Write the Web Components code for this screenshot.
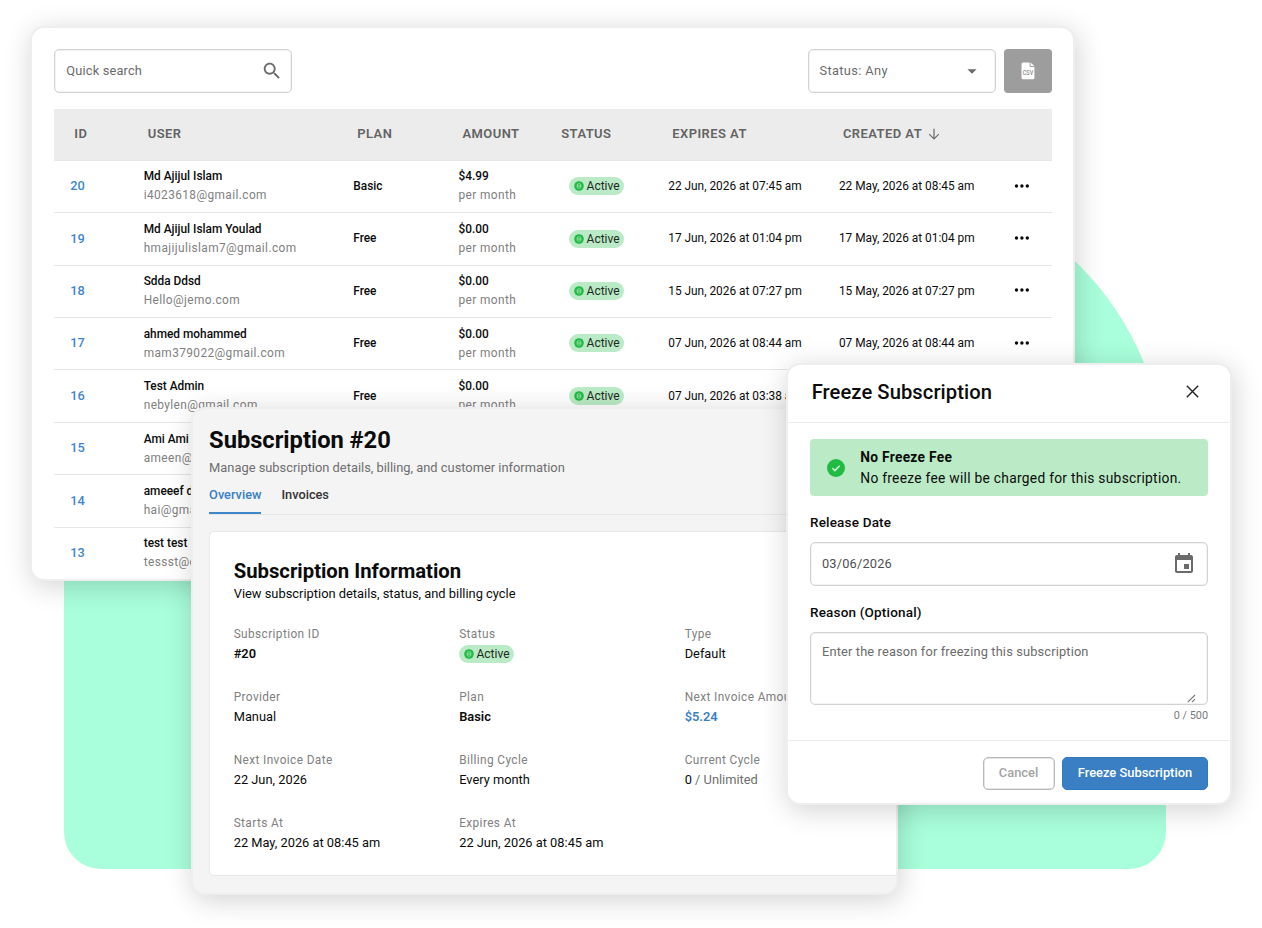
<!DOCTYPE html>
<html lang="en">
<head>
  <meta charset="UTF-8">
  <title>Subscriptions</title>
  <style>
    body {
      margin: 0;
      height: 928px;
      overflow: hidden;
      background: #fff;
      color: #0b0b0b;
      font-family: Roboto, "Liberation Sans", sans-serif;
    }
  </style>
</head>
<body>
  <subscription-scene></subscription-scene>

  <script>
    // Crea el shadow root a partir de un template
    function render(element, html) {
      const template = document.createElement('template');
      template.innerHTML = html;
      element.attachShadow({ mode: 'open' });
      element.shadowRoot.appendChild(template.content.cloneNode(true));
    }

    // Iconos
    const ICONS = {
      search: `<svg width="22" height="22" viewBox="0 0 24 24" fill="#6b6b6b"><path d="M15.5 14h-.79l-.28-.27C15.41 12.59 16 11.11 16 9.5 16 5.91 13.09 3 9.5 3S3 5.91 3 9.5 5.91 16 9.5 16c1.61 0 3.09-.59 4.23-1.57l.27.28v.79l5 4.99L20.49 19l-4.99-5zm-6 0C7.01 14 5 11.99 5 9.5S7.01 5 9.5 5 14 7.01 14 9.5 11.99 14 9.5 14z"/></svg>`,
      caret: `<svg width="22" height="22" viewBox="0 0 24 24" fill="#6b6b6b"><path d="M7 10l5 5 5-5z"/></svg>`,
      event: `<svg width="24" height="24" viewBox="0 0 24 24" fill="#6b6b6b"><path d="M17 12h-5v5h5zM16 1v2H8V1H6v2H5c-1.11 0-1.99.9-1.99 2L3 19c0 1.1.89 2 2 2h14c1.1 0 2-.9 2-2V5c0-1.1-.9-2-2-2h-1V1zm3 18H5V8h14z"/></svg>`,
      close: `<svg width="13" height="13" viewBox="0 0 13 13" fill="none" stroke="#222" stroke-width="1.4"><path d="M.8.8l11.4 11.4M12.2.8L.8 12.2"/></svg>`,
      arrow: `<svg width="12" height="12" viewBox="0 0 12 12" fill="none" stroke="#6b6b6b" stroke-width="1.2"><path d="M6 .8v10M1.2 6.1L6 10.9l4.8-4.8"/></svg>`,
      dots: `<svg width="16" height="6" viewBox="0 0 16 6" fill="#0b0b0b"><circle cx="2.5" cy="3" r="1.7"/><circle cx="7.9" cy="3" r="1.7"/><circle cx="13.3" cy="3" r="1.7"/></svg>`,
      check: `<svg width="18" height="18" viewBox="0 0 18 18"><circle cx="9" cy="9" r="9" fill="#21ba45"/><path d="M5.4 9.2l2.5 2.4 4.7-4.9" fill="none" stroke="#d5f5dc" stroke-width="1.5"/></svg>`,
      coin: `<svg width="10" height="10" viewBox="0 0 10 10"><circle cx="5" cy="5" r="4.8" fill="#21ba45"/><rect x="3.2" y="2.8" width="3.6" height="4.4" rx="1.2" fill="none" stroke="#a5e5b3" stroke-width=".8"/><path d="M3.2 5h3.6" stroke="#a5e5b3" stroke-width="1"/></svg>`,
      csv: `<svg width="14" height="18" viewBox="0 0 14 18"><path d="M2 .5h6.6v3.2q0 1.2 1.2 1.2h3.6v10.9q0 1.5-1.5 1.5H2Q.5 17.3.5 15.8V2Q.5.5 2 .5z" fill="#fff"/><path d="M9.5.5l3.9 3.6h-2.9q-1 0-1-1z" fill="#fff"/><text x="7" y="12.8" text-anchor="middle" textLength="10.4" lengthAdjust="spacingAndGlyphs" font-family="Roboto, sans-serif" font-size="6.5" font-weight="500" fill="#8d8d8d">CSV</text></svg>`,
      grip: `<svg width="9" height="9" viewBox="0 0 9 9" stroke="#777" stroke-width="1.1"><path d="M.8 8.2l7.2-7.2M5 8.2l3-3"/></svg>`
    };

    // Ventana con sombra
    class AppWindow extends HTMLElement {
      constructor() {
        super();
        render(this, `
          <style>
            :host {
              display: block;
              box-sizing: border-box;
              border: 2px solid #eee;
              border-radius: 14px;
              background: var(--window-bg, #fff);
              background-clip: padding-box;
              overflow: hidden;
              box-shadow: 2px 5px 28px rgba(0, 0, 0, 0.18);
            }
          </style>
          <slot></slot>
        `);
      }
    }

    // Caja de texto con icono al final
    class FieldBox extends HTMLElement {
      constructor() {
        super();
        render(this, `
          <style>
            :host {
              display: flex;
              justify-content: space-between;
              align-items: center;
              box-sizing: border-box;
              height: 44px;
              padding: 0 8.5px 1px 11px;
              border: 1px solid #d2d2d2;
              border-radius: 5px;
              box-shadow: inset 0 0 0 0.5px #e8e8e8;
              background: #fff;
              color: #6b6b6b;
              font-size: 12.8px;
              letter-spacing: 0.18px;
            }
            .icon { display: flex; margin-top: 1px; }
          </style>
          <slot></slot>
          <span class="icon">${ICONS[this.getAttribute('icon')] || ''}</span>
        `);
      }
    }

    class StatusPill extends HTMLElement {
      constructor() {
        super();
        render(this, `
          <style>
            :host {
              display: inline-flex;
              align-items: center;
              gap: 2.7px;
              box-sizing: border-box;
              width: 54.5px;
              height: 18px;
              padding-left: 4.6px;
              border-radius: 9px;
              background: #bbebc6;
              color: #1b2a1e;
              font-size: 12px;
              line-height: 18px;
            }
            svg { display: block; flex: none; }
          </style>
          ${ICONS.coin}<slot></slot>
        `);
      }
    }

    class SubscriptionRow extends HTMLElement {
      constructor() {
        super();
        const get = name => this.getAttribute(name) || '';
        render(this, `
          <style>
            :host {
              display: grid;
              grid-template-columns: var(--columns);
              align-items: center;
              box-sizing: border-box;
              height: 52.45px;
              padding-bottom: 0.1px;
              border-top: 1.3px solid #e6e6e6;
              font-size: 11.87px;
              line-height: 19px;
              white-space: nowrap;
            }
            div { padding-left: 16px; }
            .id { color: #3f86cb; font-weight: 500; font-size: 12.8px; }
            .strong { font-weight: 500; }
            .muted { display: block; color: #808080; letter-spacing: 0.4px; }
            .status { padding-left: 28px; padding-bottom: 0.6px; display: flex; }
            .id, .more { padding-bottom: 1.6px; }
            .more svg { display: block; }
          </style>
          <div class="id">${get('number')}</div>
          <div><span class="strong">${get('user')}</span><span class="muted">${get('email')}</span></div>
          <div class="strong">${get('plan')}</div>
          <div><span class="strong">${get('amount')}</span><span class="muted">${get('amount') && 'per month'}</span></div>
          <div class="status">${get('plan') && '<status-pill>Active</status-pill>'}</div>
          <div>${get('expires')}</div>
          <div>${get('created')}</div>
          <div class="more">${get('plan') && ICONS.dots}</div>
        `);
      }
    }

    class SubscriptionTable extends HTMLElement {
      constructor() {
        super();
        render(this, `
          <style>
            :host {
              --columns: 73.4px 209.6px 105.2px 98.8px 111px 170.7px 175px 1fr;
              display: block;
            }
            header {
              display: grid;
              grid-template-columns: var(--columns);
              align-items: center;
              box-sizing: border-box;
              height: 50.4px;
              padding-bottom: 2px;
              background: #ececec;
              color: #636363;
              font-size: 12.95px;
              font-weight: 600;
              letter-spacing: 0.46px;
            }
            header span { display: flex; align-items: center; gap: 5.5px; padding-left: 20px; }
            header svg { margin-top: 2px; }
          </style>
          <header>
            <span>ID</span><span>USER</span><span>PLAN</span><span>AMOUNT</span>
            <span>STATUS</span><span>EXPIRES AT</span><span>CREATED AT ${ICONS.arrow}</span>
          </header>
          <subscription-row number="20" user="Md Ajijul Islam" email="i4023618@gmail.com" plan="Basic" amount="$4.99" expires="22 Jun, 2026 at 07:45 am" created="22 May, 2026 at 08:45 am"></subscription-row>
          <subscription-row number="19" user="Md Ajijul Islam Youlad" email="hmajijulislam7@gmail.com" plan="Free" amount="$0.00" expires="17 Jun, 2026 at 01:04 pm" created="17 May, 2026 at 01:04 pm"></subscription-row>
          <subscription-row number="18" user="Sdda Ddsd" email="Hello@jemo.com" plan="Free" amount="$0.00" expires="15 Jun, 2026 at 07:27 pm" created="15 May, 2026 at 07:27 pm"></subscription-row>
          <subscription-row number="17" user="ahmed mohammed" email="mam379022@gmail.com" plan="Free" amount="$0.00" expires="07 Jun, 2026 at 08:44 am" created="07 May, 2026 at 08:44 am"></subscription-row>
          <subscription-row number="16" user="Test Admin" email="nebylen@gmail.com" plan="Free" amount="$0.00" expires="07 Jun, 2026 at 03:38 am"></subscription-row>
          <subscription-row number="15" user="Ami Ami" email="ameen@"></subscription-row>
          <subscription-row number="14" user="ameeef d" email="hai@gma"></subscription-row>
          <subscription-row number="13" user="test test" email="tessst@e"></subscription-row>
        `);
      }
    }

    class SubscriptionList extends HTMLElement {
      constructor() {
        super();
        render(this, `
          <style>
            :host { display: block; padding: 21.5px 21.5px 0 22.3px; }
            nav { display: flex; gap: 8px; margin-bottom: 16px; }
            .search { width: 238px; margin-right: auto; }
            .status { width: 188.5px; padding-right: 12.5px; letter-spacing: 0.36px; }
            button {
              display: flex;
              align-items: center;
              justify-content: center;
              width: 47.5px;
              height: 44px;
              padding: 0 0 1px;
              border: 0;
              border-radius: 4px;
              background: #9d9d9d;
            }
          </style>
          <nav>
            <field-box class="search" icon="search">Quick search</field-box>
            <field-box class="status" icon="caret">Status: Any</field-box>
            <button aria-label="Export">${ICONS.csv}</button>
          </nav>
          <subscription-table></subscription-table>
        `);
      }
    }

    class InfoItem extends HTMLElement {
      constructor() {
        super();
        render(this, `
          <style>
            :host {
              display: block;
              height: 63px;
              font-size: 12.83px;
              line-height: 20px;
              white-space: nowrap;
            }
            small {
              display: block;
              color: #808080;
              font-size: 11.85px;
              line-height: 19px;
              letter-spacing: 0.39px;
            }
          </style>
          <small>${this.getAttribute('label')}</small>
          <slot></slot>
        `);
      }
    }

    class SubscriptionDetails extends HTMLElement {
      constructor() {
        super();
        render(this, `
          <style>
            :host { display: block; padding: 14.7px 0 0 15.8px; white-space: nowrap; }
            h1 { margin: 0; font-size: 23.7px; line-height: 34px; font-weight: 700; letter-spacing: -0.02px; }
            .subtitle { margin: 0; color: #6e6e6e; font-size: 12.87px; line-height: 21px; }
            nav {
              display: flex;
              gap: 20px;
              height: 36px;
              margin-bottom: 15.6px;
              border-bottom: 1px solid #e6e6e6;
              font-size: 12.75px;
              line-height: 33px;
              font-weight: 500;
              color: #333;
            }
            .active { height: 33.5px; color: #3a7fc4; border-bottom: 2.4px solid #3f86cb; }
            section {
              box-sizing: border-box;
              width: 900px;
              height: 345.5px;
              padding: 24.8px 0 0 23.6px;
              border: 1.5px solid #e8e8e8;
              border-radius: 5px;
              background: #fff;
            }
            h2 { margin: 0; font-size: 20.3px; line-height: 28px; font-weight: 700; }
            .lead { margin: 0 0 22.6px; font-size: 12.88px; line-height: 18px; }
            .grid { display: grid; grid-template-columns: repeat(3, 225.5px); }
            b { font-weight: 600; }
            .price { color: #3a7fc4; font-weight: 600; }
            .rest { color: #6e6e6e; }
            status-pill { vertical-align: top; margin-top: 1.2px; }
          </style>
          <h1>Subscription #20</h1>
          <p class="subtitle">Manage subscription details, billing, and customer information</p>
          <nav><span class="active">Overview</span><span>Invoices</span></nav>
          <section>
            <h2>Subscription Information</h2>
            <p class="lead">View subscription details, status, and billing cycle</p>
            <div class="grid">
              <info-item label="Subscription ID"><b>#20</b></info-item>
              <info-item label="Status"><status-pill>Active</status-pill></info-item>
              <info-item label="Type">Default</info-item>
              <info-item label="Provider">Manual</info-item>
              <info-item label="Plan"><b>Basic</b></info-item>
              <info-item label="Next Invoice Amount"><span class="price">$5.24</span></info-item>
              <info-item label="Next Invoice Date">22 Jun, 2026</info-item>
              <info-item label="Billing Cycle">Every month</info-item>
              <info-item label="Current Cycle">0 <span class="rest">/ Unlimited</span></info-item>
              <info-item label="Starts At">22 May, 2026 at 08:45 am</info-item>
              <info-item label="Expires At">22 Jun, 2026 at 08:45 am</info-item>
            </div>
          </section>
        `);
      }
    }

    class FreezeDialog extends HTMLElement {
      constructor() {
        super();
        render(this, `
          <style>
            :host { display: block; white-space: nowrap; }
            header {
              display: flex;
              align-items: center;
              justify-content: space-between;
              box-sizing: border-box;
              height: 57.5px;
              padding: 0 31px 2px 23.7px;
              border-bottom: 1.6px solid #ebebeb;
            }
            h2 { margin: 0; font-size: 20.2px; font-weight: 500; letter-spacing: 0.06px; }
            header svg { margin-bottom: 2px; }
            main { padding: 16px 22px 0; }
            .alert {
              display: flex;
              align-items: center;
              gap: 15.3px;
              box-sizing: border-box;
              height: 57px;
              padding: 1.2px 0 0 17px;
              border-radius: 4px;
              background: #bbebc6;
              font-size: 13.8px;
              line-height: 21px;
              letter-spacing: 0.27px;
            }
            .alert svg { margin-top: 1px; }
            .alert b { display: block; font-weight: 700; }
            label {
              display: block;
              height: 30.5px;
              font-size: 13.5px;
              line-height: 20px;
              font-weight: 500;
              letter-spacing: 0.18px;
            }
            .date { margin-bottom: 15.5px; padding-right: 11px; color: #4f4f4f; }
            .alert + label { margin-top: 16px; }
            .reason {
              align-items: stretch;
              height: 73px;
              line-height: 37px;
              letter-spacing: 0.16px;
            }
            .reason .grip { align-self: flex-end; line-height: 0; margin: 0 3px 0 auto; }
            .counter { margin-top: 2px; color: #7a7a7a; font-size: 10.85px; line-height: 18px; text-align: right; }
            footer {
              display: flex;
              justify-content: flex-end;
              gap: 7.5px;
              margin-top: 15px;
              padding: 15.8px 22px;
              border-top: 1.6px solid #ebebeb;
            }
            button {
              box-sizing: border-box;
              height: 33px;
              padding: 0 0 1px;
              border: 1px solid #b9b9b9;
              border-radius: 5px;
              box-shadow: inset 0 0 0 0.5px #ccc;
              background: #fff;
              color: #a3a3a3;
              font: 500 12.9px Roboto, sans-serif;
            }
            .cancel { width: 72px; }
            .primary { width: 146px; border-color: #3078c4; box-shadow: none; background: #3a7fc4; color: #fff; }
          </style>
          <header><h2>Freeze Subscription</h2>${ICONS.close}</header>
          <main>
            <div class="alert">${ICONS.check}<div><b>No Freeze Fee</b>No freeze fee will be charged for this subscription.</div></div>
            <label>Release Date</label>
            <field-box class="date" icon="event">03/06/2026</field-box>
            <label>Reason (Optional)</label>
            <field-box class="reason">Enter the reason for freezing this subscription<span class="grip">${ICONS.grip}</span></field-box>
            <div class="counter">0 / 500</div>
          </main>
          <footer><button class="cancel">Cancel</button><button class="primary">Freeze Subscription</button></footer>
        `);
      }
    }

    class SubscriptionScene extends HTMLElement {
      constructor() {
        super();
        render(this, `
          <style>
            :host { display: block; position: relative; width: 1262px; height: 928px; overflow: hidden; }
            .shape, app-window { position: absolute; }
            /* Forma verde del fondo */
            .shape {
              left: 64.3px; top: 178px; width: 1101.7px; height: 691px;
              border-radius: 297px 297px 37px 37px;
              background: #a9ffdb;
            }
            .list { left: 30px; top: 25.8px; width: 1045px; height: 555.2px; }
            .details { left: 191.3px; top: 406.5px; width: 706.7px; height: 488.5px; --window-bg: #f4f4f4; }
            .dialog { left: 786px; top: 363px; width: 446px; height: 442px; }
          </style>
          <div class="shape"></div>
          <app-window class="list"><subscription-list></subscription-list></app-window>
          <app-window class="details"><subscription-details></subscription-details></app-window>
          <app-window class="dialog"><freeze-dialog></freeze-dialog></app-window>
        `);
      }
    }

    customElements.define('app-window', AppWindow);
    customElements.define('field-box', FieldBox);
    customElements.define('status-pill', StatusPill);
    customElements.define('subscription-row', SubscriptionRow);
    customElements.define('subscription-table', SubscriptionTable);
    customElements.define('subscription-list', SubscriptionList);
    customElements.define('info-item', InfoItem);
    customElements.define('subscription-details', SubscriptionDetails);
    customElements.define('freeze-dialog', FreezeDialog);
    customElements.define('subscription-scene', SubscriptionScene);
  </script>
</body>
</html>
